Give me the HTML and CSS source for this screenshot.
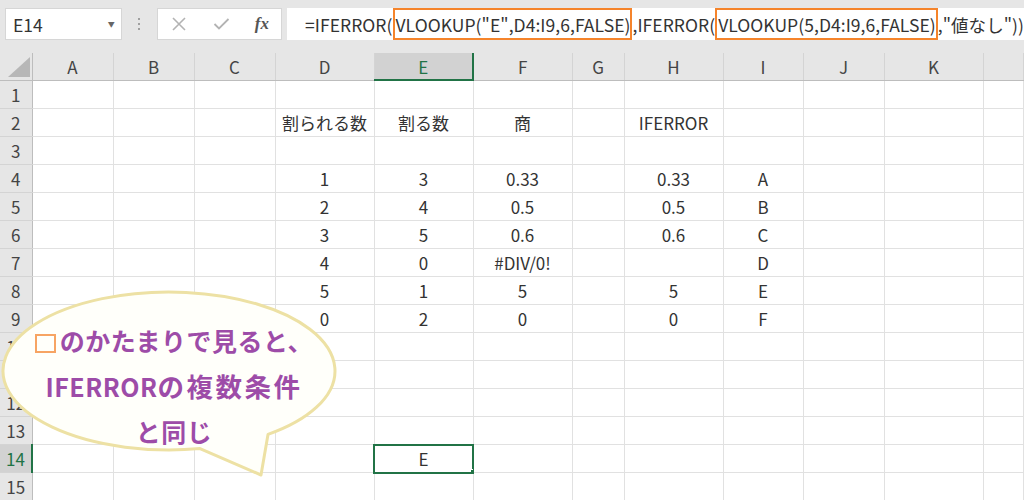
FILE: index.html
```html
<!DOCTYPE html>
<html lang="ja">
    <head>
        <title>IFERROR VLOOKUP</title>
        <meta charset="UTF-8">
        <link rel="stylesheet" href="styles.css">
    </head>
    <body>
        <div class="toolbar">
            <div class="namebox"><span>E14</span><span class="arrow">&#9660;</span></div>
            <div class="grip"><span></span><span></span><span></span></div>
            <div class="fbuttons">
                <svg width="16" height="16" viewBox="0 0 16 16"><path d="M2 2 L14 14 M14 2 L2 14" stroke="#b3b3b3" stroke-width="1.6" fill="none"/></svg>
                <svg width="17" height="14" viewBox="0 0 17 14"><path d="M1.5 7 L6 11.5 L15.5 2" stroke="#b3b3b3" stroke-width="1.8" fill="none"/></svg>
                <span class="fx">fx</span>
            </div>
            <div class="formula">=IFERROR(<span class="hl">VLOOKUP("E",D4:I9,6,FALSE)</span>,IFERROR(<span class="hl">VLOOKUP(5,D4:I9,6,FALSE)</span>,"値なし"))</div>
        </div>

        <table class="sheet">
            <colgroup>
                <col class="c-hdr">
                <col class="c81"><col class="c81"><col class="c81">
                <col class="c99"><col class="c99"><col class="c99">
                <col class="c52">
                <col class="c99"><col class="c80"><col class="c81"><col class="c99">
                <col>
            </colgroup>
            <tr class="colhead">
                <th class="corner"><span class="tri"></span></th>
                <th>A</th><th>B</th><th>C</th><th>D</th><th class="cur">E</th><th>F</th><th>G</th><th>H</th><th>I</th><th>J</th><th>K</th><th></th>
            </tr>
            <tr><th>1</th><td></td><td></td><td></td><td></td><td></td><td></td><td></td><td></td><td></td><td></td><td></td><td></td></tr>
            <tr><th>2</th><td></td><td></td><td></td><td>割られる数</td><td>割る数</td><td>商</td><td></td><td>IFERROR</td><td></td><td></td><td></td><td></td></tr>
            <tr><th>3</th><td></td><td></td><td></td><td></td><td></td><td></td><td></td><td></td><td></td><td></td><td></td><td></td></tr>
            <tr><th>4</th><td></td><td></td><td></td><td>1</td><td>3</td><td>0.33</td><td></td><td>0.33</td><td>A</td><td></td><td></td><td></td></tr>
            <tr><th>5</th><td></td><td></td><td></td><td>2</td><td>4</td><td>0.5</td><td></td><td>0.5</td><td>B</td><td></td><td></td><td></td></tr>
            <tr><th>6</th><td></td><td></td><td></td><td>3</td><td>5</td><td>0.6</td><td></td><td>0.6</td><td>C</td><td></td><td></td><td></td></tr>
            <tr><th>7</th><td></td><td></td><td></td><td>4</td><td>0</td><td>#DIV/0!</td><td></td><td></td><td>D</td><td></td><td></td><td></td></tr>
            <tr><th>8</th><td></td><td></td><td></td><td>5</td><td>1</td><td>5</td><td></td><td>5</td><td>E</td><td></td><td></td><td></td></tr>
            <tr><th>9</th><td></td><td></td><td></td><td>0</td><td>2</td><td>0</td><td></td><td>0</td><td>F</td><td></td><td></td><td></td></tr>
            <tr><th>10</th><td></td><td></td><td></td><td></td><td></td><td></td><td></td><td></td><td></td><td></td><td></td><td></td></tr>
            <tr><th>11</th><td></td><td></td><td></td><td></td><td></td><td></td><td></td><td></td><td></td><td></td><td></td><td></td></tr>
            <tr><th>12</th><td></td><td></td><td></td><td></td><td></td><td></td><td></td><td></td><td></td><td></td><td></td><td></td></tr>
            <tr><th>13</th><td></td><td></td><td></td><td></td><td></td><td></td><td></td><td></td><td></td><td></td><td></td><td></td></tr>
            <tr><th class="cur">14</th><td></td><td></td><td></td><td></td><td class="sel">E</td><td></td><td></td><td></td><td></td><td></td><td></td><td></td></tr>
            <tr><th>15</th><td></td><td></td><td></td><td></td><td></td><td></td><td></td><td></td><td></td><td></td><td></td><td></td></tr>
        </table>

        <!-- 吹き出し -->
        <div class="callout">
            <svg class="bubble" width="345" height="192" viewBox="0 0 345 192">
                <path d="M268 146.4 L261 187 L200 160.6 A166 79 0 1 1 268 146.4 Z"/>
            </svg>
            <p class="bubble-text"><span class="box"></span>のかたまりで見ると、<br>IFERROR<span class="wide">の複数条件</span><br>と同じ</p>
        </div>
    </body>
</html>
```

FILE: styles.css
```css
body{
    margin: 0;
    font-family: "Noto Sans CJK JP", "Noto Sans", sans-serif;
    color: #333;
    background: #fff;
    overflow: hidden;
}

/* formula bar */
.toolbar{
    height: 53px;
    box-sizing: border-box;
    padding: 8px 0 0 5px;
    background: #e6e6e6;
    display: flex;
    align-items: flex-start;
}
.namebox{
    width: 118px;
    height: 32px;
    box-sizing: border-box;
    background: #fff;
    border: 1px solid #d6d6d6;
    display: flex;
    align-items: center;
    justify-content: space-between;
    padding: 0 6px 0 7px;
    font-size: 17.5px;
}
.namebox .arrow{
    font-size: 7px;
    color: #666;
}
.grip{
    width: 36px;
    height: 32px;
    display: flex;
    flex-direction: column;
    align-items: center;
    justify-content: center;
    gap: 3px;
}
.grip span{
    width: 2px;
    height: 2px;
    background: #a0a0a0;
}
.fbuttons{
    width: 126px;
    height: 32px;
    box-sizing: border-box;
    background: #fff;
    border: 1px solid #d6d6d6;
    display: flex;
    align-items: center;
    justify-content: space-between;
    padding: 0 12px 0 13px;
}
.fx{
    font-family: "Liberation Serif", serif;
    font-style: italic;
    font-weight: bold;
    font-size: 17px;
    color: #555;
}
.formula{
    flex: 1;
    height: 32px;
    margin-left: 5px;
    box-sizing: border-box;
    background: #fff;
    padding-left: 18px;
    display: flex;
    align-items: center;
    white-space: pre;
    font-size: 17.5px;
    letter-spacing: 0.05px;
}
.formula .hl{
    align-self: stretch;
    display: flex;
    align-items: center;
    border: 2px solid #f5842b;
    padding: 0 0 0 1px;
}

/* sheet */
.sheet{
    border-collapse: collapse;
    table-layout: fixed;
    width: 1024px;
    font-size: 17px;
}
.c-hdr{ width: 32px; }
.c81{ width: 81px; }
.c99{ width: 99px; }
.c52{ width: 52px; }
.c80{ width: 80px; }

.sheet td, .sheet th{
    height: 27px;
    padding: 0;
    text-align: center;
    white-space: nowrap;
    overflow: hidden;
    font-weight: normal;
}
.sheet td{
    border: 1px solid #e1e1e1;
}
.sheet th{
    background: #e6e6e6;
    color: #444;
    border-right: 1px solid #bdbdbd;
    border-bottom: 1px solid #d4d4d4;
}
.sheet .colhead th{
    height: 26px;
    border-right: 1px solid #d4d4d4;
    border-bottom: 1px solid #bdbdbd;
}
.sheet .colhead th.corner{
    border-right: 1px solid #bdbdbd;
    text-align: right;
    vertical-align: bottom;
}
.tri{
    display: inline-block;
    width: 0;
    height: 0;
    border-left: 22px solid transparent;
    border-bottom: 20px solid #b7b7b7;
    margin: 0 2px 3px 0;
    vertical-align: bottom;
}
.sheet .colhead th.cur{
    background: #d2d2d2;
    color: #217346;
    border-bottom: 2px solid #217346;
}
.sheet th.cur{
    background: #d2d2d2;
    color: #217346;
    border-right: 2px solid #217346;
}
.sheet td.sel{
    position: relative;
    outline: 2px solid #217346;
    outline-offset: -1px;
}
.sheet td.sel::after{
    content: "";
    position: absolute;
    right: -4px;
    bottom: -4px;
    width: 5px;
    height: 5px;
    background: #217346;
    border: 1px solid #fff;
}

/* callout */
.callout{
    position: absolute;
    left: 0;
    top: 288px;
    width: 345px;
    height: 192px;
}
.bubble{
    position: absolute;
    left: 0;
    top: 0;
}
.bubble path{
    fill: #fffffa;
    stroke: #ede1a4;
    stroke-width: 3;
    stroke-linejoin: round;
}
.bubble-text{
    position: relative;
    margin: 0;
    padding: 30px 0 0 3px;
    text-align: center;
    font-size: 25px;
    font-weight: bold;
    line-height: 45px;
    letter-spacing: 0.5px;
    color: #9d4ca8;
}
.bubble-text .wide{
    font-size: 26.5px;
    letter-spacing: 2.5px;
}
.box{
    display: inline-block;
    width: 21px;
    height: 19px;
    box-sizing: border-box;
    border: 2px solid #f7a463;
    vertical-align: -2px;
    margin-right: 4px;
}
```
